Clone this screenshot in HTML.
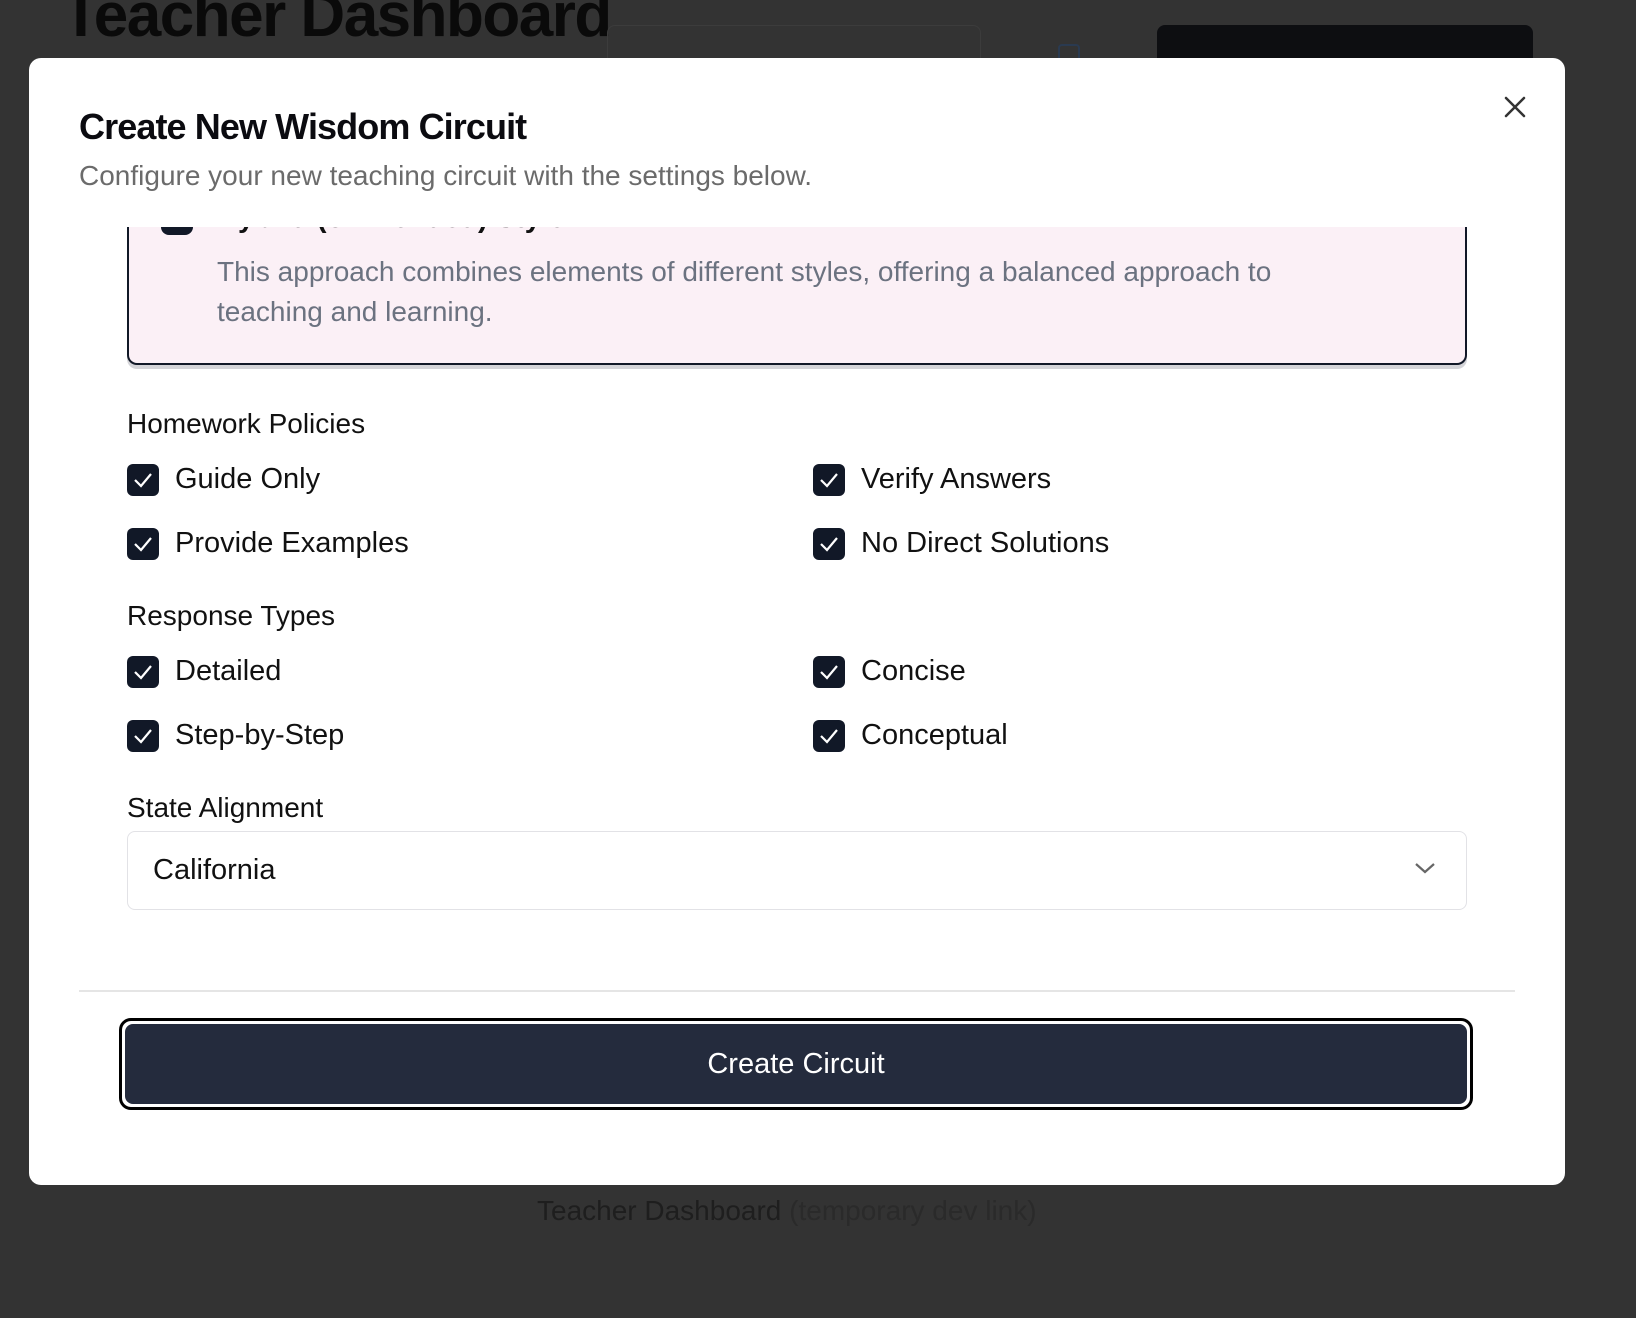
<!DOCTYPE html>
<html><head><meta charset="utf-8"><style>
*{box-sizing:border-box;margin:0;padding:0}
body{width:1636px;height:1318px;background:#333;font-family:"Liberation Sans",Arial,sans-serif;position:relative;overflow:hidden}
.bgtitle{position:absolute;left:62px;top:-20px;font-size:62px;font-weight:bold;color:#0a0a0a;letter-spacing:-1.5px}
.bgbox{position:absolute;left:607px;top:25px;width:374px;height:60px;border:1px solid #3c3c3c;border-radius:8px}
.bgbtn{position:absolute;left:1157px;top:25px;width:376px;height:60px;background:#0d0e11;border-radius:8px}
.bgicon{position:absolute;left:1058px;top:44px;width:22px;height:20px;border:2px solid #2a3a50;border-radius:4px}
.foot{position:absolute;left:537px;top:1195px;font-size:28px;color:#1e1e1e}
.foot span{color:#2a2a2a}
.modal{position:absolute;left:29px;top:58px;width:1536px;height:1127px;background:#fff;border-radius:12px}
.t{position:absolute;left:79px;top:106px;font-size:36px;font-weight:bold;color:#0b0b10;letter-spacing:-0.9px}
.s{position:absolute;left:79px;top:160px;font-size:28px;color:#6b6b6b}
.x{position:absolute;left:1502px;top:94px}
.scroll{position:absolute;left:0;top:227px;width:1636px;height:760px;overflow:hidden}
.card{position:absolute;left:127px;top:-30px;width:1340px;height:168px;background:#fbf0f6;border:2px solid #111827;border-top:none;border-radius:0 0 10px 10px;box-shadow:0 4px 0 #d4d4d8}
.card p{position:absolute;left:88px;top:55px;width:1120px;font-size:28px;line-height:40px;color:#6b7280}
.dot{position:absolute;left:32px;top:20px;width:32px;height:18px;background:#111827;border-radius:0 0 8px 8px}
.hyb{position:absolute;left:88px;top:5px;font-size:29px;font-weight:bold;color:#111}
.h{position:absolute;left:127px;font-size:28px;color:#111}
.cb{position:absolute;width:32px;height:32px;background:#111827;border-radius:6px}
.cb svg{position:absolute;left:5px;top:6px}
.l{position:absolute;font-size:29px;color:#111}
.sel{position:absolute;left:127px;top:604px;width:1340px;height:79px;border:1.5px solid #e2e2e6;border-radius:8px}
.sel span{position:absolute;left:25px;top:22px;font-size:29px;color:#111}
.sel svg{position:absolute;right:30px;top:29px}
.div{position:absolute;left:79px;top:990px;width:1436px;height:2px;background:#e5e5e5}
.btn{position:absolute;left:119px;top:1018px;width:1354px;height:92px;border:3px solid #000;border-radius:12px;padding:3px}
.btn div{width:100%;height:100%;background:#242b3d;border-radius:8px;color:#fff;font-size:29px;text-align:center;line-height:80px}
</style></head><body>
<div class="bgtitle">Teacher Dashboard</div>
<div class="bgbox"></div><div class="bgicon"></div><div class="bgbtn"></div>
<div class="foot">Teacher Dashboard <span>(temporary dev link)</span></div>
<div class="modal"></div>
<div class="t">Create New Wisdom Circuit</div>
<div class="s">Configure your new teaching circuit with the settings below.</div>
<svg class="x" width="26" height="26" viewBox="0 0 26 26"><path d="M4 4L22 22M22 4L4 22" stroke="#333" stroke-width="2.5" stroke-linecap="round"/></svg>
<div class="scroll">
<div class="card"><div class="dot"></div><div class="hyb">Hybrid (or Blended) Style</div><p>This approach combines elements of different styles, offering a balanced approach to teaching and learning.</p></div>
<div class="h" style="top:181px">Homework Policies</div>
<div class="cb" style="left:127px;top:237px"><svg width="22" height="20"><path d="M3 10L9 16L19 4" fill="none" stroke="#fff" stroke-width="2.2"/></svg></div><div class="l" style="left:175px;top:236px">Guide Only</div>
<div class="cb" style="left:813px;top:237px"><svg width="22" height="20"><path d="M3 10L9 16L19 4" fill="none" stroke="#fff" stroke-width="2.2"/></svg></div><div class="l" style="left:861px;top:236px">Verify Answers</div>
<div class="cb" style="left:127px;top:301px"><svg width="22" height="20"><path d="M3 10L9 16L19 4" fill="none" stroke="#fff" stroke-width="2.2"/></svg></div><div class="l" style="left:175px;top:300px">Provide Examples</div>
<div class="cb" style="left:813px;top:301px"><svg width="22" height="20"><path d="M3 10L9 16L19 4" fill="none" stroke="#fff" stroke-width="2.2"/></svg></div><div class="l" style="left:861px;top:300px">No Direct Solutions</div>
<div class="h" style="top:373px">Response Types</div>
<div class="cb" style="left:127px;top:429px"><svg width="22" height="20"><path d="M3 10L9 16L19 4" fill="none" stroke="#fff" stroke-width="2.2"/></svg></div><div class="l" style="left:175px;top:428px">Detailed</div>
<div class="cb" style="left:813px;top:429px"><svg width="22" height="20"><path d="M3 10L9 16L19 4" fill="none" stroke="#fff" stroke-width="2.2"/></svg></div><div class="l" style="left:861px;top:428px">Concise</div>
<div class="cb" style="left:127px;top:493px"><svg width="22" height="20"><path d="M3 10L9 16L19 4" fill="none" stroke="#fff" stroke-width="2.2"/></svg></div><div class="l" style="left:175px;top:492px">Step-by-Step</div>
<div class="cb" style="left:813px;top:493px"><svg width="22" height="20"><path d="M3 10L9 16L19 4" fill="none" stroke="#fff" stroke-width="2.2"/></svg></div><div class="l" style="left:861px;top:492px">Conceptual</div>
<div class="h" style="top:565px">State Alignment</div>
<div class="sel"><span>California</span><svg width="22" height="14"><path d="M2 3L11 11L20 3" fill="none" stroke="#666" stroke-width="2.2"/></svg></div>
</div>
<div class="div"></div>
<div class="btn"><div>Create Circuit</div></div>
</body></html>
